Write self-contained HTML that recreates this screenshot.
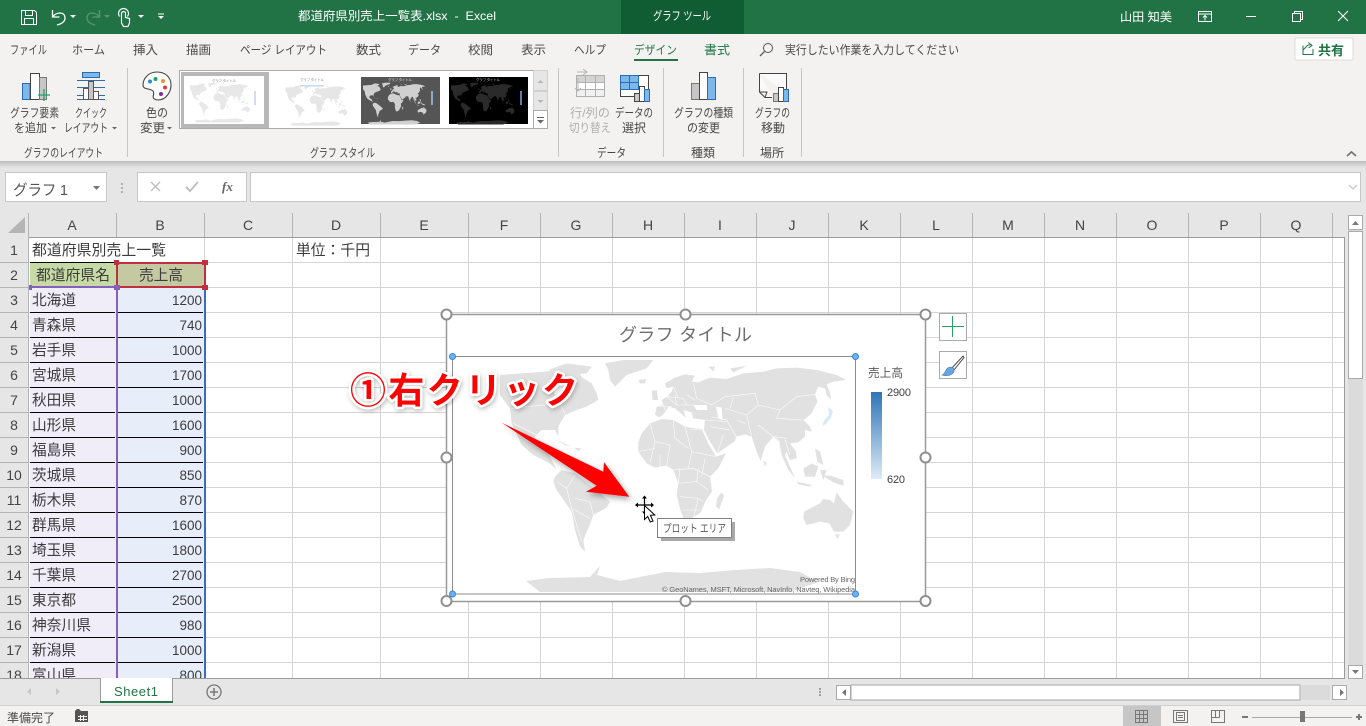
<!DOCTYPE html>
<html lang="ja"><head><meta charset="utf-8"><title>都道府県別売上一覧表.xlsx - Excel</title>
<style>
html,body{margin:0;padding:0;background:#e6e6e6;overflow:hidden;width:1366px;height:726px}
svg{display:block;position:absolute;left:0;top:0}
text{font-family:"Liberation Sans","Noto Sans CJK JP",sans-serif;white-space:pre}
.w{fill:#fff;font-size:12px}
.t{fill:#484848;font-size:12px}
.d{fill:#b0b0b0;font-size:12px}
.g{fill:#217346;font-size:12px}
.h{fill:#444;font-size:14px;text-anchor:middle}
.c{fill:#3c3c3c;font-size:14.67px}
.n{fill:#3c3c3c;font-size:13.5px;text-anchor:end}
.x{shape-rendering:crispEdges}
</style></head><body>
<svg width="1366" height="726" viewBox="0 0 1366 726" xmlns="http://www.w3.org/2000/svg">
<defs>
<linearGradient id="lg" x1="0" y1="0" x2="0" y2="1"><stop offset="0" stop-color="#2e75b6"/><stop offset="1" stop-color="#deebf7"/></linearGradient>
<linearGradient id="sh" x1="0" y1="0" x2="0" y2="1"><stop offset="0" stop-color="#bdbdbd"/><stop offset="1" stop-color="#e6e6e6"/></linearGradient>
<filter id="ds" x="-20%" y="-20%" width="150%" height="150%"><feDropShadow dx="2" dy="3" stdDeviation="3" flood-color="#000" flood-opacity=".35"/></filter>
<filter id="ts" x="-10%" y="-20%" width="120%" height="150%"><feDropShadow dx="1" dy="2" stdDeviation="2" flood-color="#000" flood-opacity=".25"/></filter>
<g id="land">
<g transform="translate(450 355) scale(.33333)">
<path d="M150 60L215 55 290 50 335 40 380 45 400 70 425 85 440 115 445 135 410 155 380 165 345 180 325 215 325 245 315 225 275 225 255 245 260 270 290 285 320 345 300 325 250 300 215 270 185 205 180 160 150 120Z"/>
<path d="M295 45L350 25 425 35 410 55 350 60Z"/>
<path d="M465 25L520 15 610 15 590 40 530 60 495 95 480 75 475 45Z"/>
<path d="M320 255L365 275 345 270Z"/><path d="M372 278L395 280 385 288Z"/>
<path d="M315 365L335 345 375 355 420 390 480 440 470 458 430 480 415 520 400 555 405 590 390 575 375 525 365 470 320 405 310 380Z"/>
</g>
<g transform="translate(630 355) scale(.33333)">
<path d="M75 178L80 155 100 150 95 135 112 125 125 110 130 95 110 100 105 85 135 68 165 58 195 62 185 80 205 82 240 68 290 72 340 55 400 50 440 40 500 38 560 45 620 60 648 75 610 80 590 88 600 112 603 135 590 120 585 100 565 95 555 118 562 140 545 175 530 188 520 195 540 215 545 230 525 225 525 245 505 262 480 265 498 290 500 310 480 315 470 290 465 300 495 370 475 345 455 300 448 262 430 245 405 275 392 318 378 285 365 245 345 238 318 245 315 258 262 295 240 260 222 225 225 195 190 190 185 172 160 165 168 188 135 160 115 155 108 170 88 188Z"/>
<path d="M25 262L35 235 60 205 95 192 130 195 165 215 195 220 215 222 235 265 258 305 288 295 265 340 240 365 246 410 228 435 212 472 185 490 160 490 150 460 140 420 145 385 130 345 110 332 75 338 50 325 25 290Z"/>
<path d="M275 412L282 422 268 462 258 455 262 428Z"/>
<path d="M522 470L570 445 580 432 600 435 612 445 620 412 640 440 670 470 660 510 640 530 612 530 598 505 570 500 530 510 520 490Z"/>
<path d="M578 362L600 362 640 375 640 392 610 382Z"/>
<path d="M520 340L545 325 565 335 555 365 525 365Z"/>
<path d="M500 380L545 390 540 395 505 388Z"/>
<path d="M570 345L590 345 580 375Z"/>
<path d="M555 280L570 290 580 330 562 320Z"/>
<path d="M400 318L410 322 405 335Z"/>
<path d="M65 108L80 105 85 135 68 135Z"/>
<path d="M25 75L48 72 45 85 30 85Z"/>
<path d="M235 35L255 35 250 50Z"/><path d="M300 40L350 33 310 52Z"/>
<path d="M615 538L630 538 622 552Z"/>
</g>
<path d="M526 581L550 578 590 577 600 566 597 575 620 581 640 577 665 572 700 573 735 570 770 568 800 572 818 582 790 592 540 592Z"/>
</g>
</defs>

<!-- title bar -->
<rect x="0" y="0" width="1366" height="34" fill="#217346"/>
<rect x="621" y="0" width="123" height="34" fill="#105c33"/>
<g fill="none" stroke="#fff" stroke-width="1">
<path d="M21.500 10.500H34.500L36.500 12.500V24.500H21.500ZM25.500 10.500V15.500H32.500V10.500M24.500 24.500V18.500H33.500V24.500"/>
<path d="M52.500 10V17H59.500M52.500 17C56 12 65 11 65 18 65 22 61 24 57 25" stroke-width="1.300"/>
<path d="M99.500 10V17H92.500M99.500 17C96 12 87 11 87 18 87 22 91 24 95 25" stroke="#5d9376" stroke-width="1.300"/>
<path d="M121.500 23V13.500A2 2 0 0 1 125.500 13.500V17.500L129.500 18.500V23L128 26.500H123.500ZM119.500 16.500A5 5 0 1 1 127.500 16.500" stroke-width="1.200"/>
<path d="M1198.500 11.500H1211.500V21.500H1198.500ZM1198.500 14H1211.500M1205 20.500V15.500M1203 17.500L1205 15.500 1207 17.500"/>
<path d="M1246 16.500H1256"/>
<path d="M1292.500 13.500H1300.500V21.500H1292.500ZM1294.500 13.500V11.500H1302.500V19.500H1300.500"/>
<path d="M1338 11L1348 21M1348 11L1338 21"/>
</g>
<g fill="#fff">
<path d="M70 15h6l-3 3z"/><path d="M104 15h6l-3 3z" fill="#5d9376"/><path d="M138 15h6l-3 3z"/>
<path d="M158 13.500h6v1h-6zM158 16h6l-3 3z"/>
</g>
<text class="w" x="298" y="20" textLength="198" lengthAdjust="spacingAndGlyphs">都道府県別売上一覧表.xlsx  -  Excel</text>
<text class="w" x="653" y="20" textLength="58" lengthAdjust="spacingAndGlyphs">グラフ ツール</text>
<text class="w" x="1120" y="21" textLength="52" lengthAdjust="spacingAndGlyphs">山田 知美</text>

<!-- ribbon -->
<rect x="0" y="34" width="1366" height="127" fill="#f3f2f1"/>
<rect x="0" y="161" width="1366" height="7" fill="url(#sh)"/>
<rect x="0" y="168" width="1366" height="46" fill="#e6e6e6"/>
<g>
<text class="t" x="10" y="54" textLength="37" lengthAdjust="spacingAndGlyphs">ファイル</text>
<text class="t" x="72" y="54" textLength="33" lengthAdjust="spacingAndGlyphs">ホーム</text>
<text class="t" x="133" y="54" textLength="25" lengthAdjust="spacingAndGlyphs">挿入</text>
<text class="t" x="186" y="54" textLength="25" lengthAdjust="spacingAndGlyphs">描画</text>
<text class="t" x="240" y="54" textLength="87" lengthAdjust="spacingAndGlyphs">ページ レイアウト</text>
<text class="t" x="356" y="54" textLength="25" lengthAdjust="spacingAndGlyphs">数式</text>
<text class="t" x="408" y="54" textLength="33" lengthAdjust="spacingAndGlyphs">データ</text>
<text class="t" x="468" y="54" textLength="25" lengthAdjust="spacingAndGlyphs">校閲</text>
<text class="t" x="521" y="54" textLength="25" lengthAdjust="spacingAndGlyphs">表示</text>
<text class="t" x="574" y="54" textLength="32" lengthAdjust="spacingAndGlyphs">ヘルプ</text>
<text class="g" x="634" y="54" textLength="43" lengthAdjust="spacingAndGlyphs">デザイン</text>
<text class="g" x="704" y="54" textLength="26" lengthAdjust="spacingAndGlyphs">書式</text>
<text class="t" x="785" y="54" textLength="174" lengthAdjust="spacingAndGlyphs">実行したい作業を入力してください</text>
</g>
<rect class="x" x="634" y="59" width="44" height="2" fill="#217346"/>
<circle cx="768" cy="48" r="4.500" fill="none" stroke="#555"/><path d="M764.500 51.500L760 56" stroke="#555" stroke-width="1.300"/>
<rect x="1295" y="38" width="58" height="22" rx="1" fill="#fff" stroke="#dedcda"/>
<path d="M1303 45.500V54.500H1313V49M1303 50L1308 45H1310.500M1308.500 42.500L1312 45.500 1308.500 48" fill="none" stroke="#217346"/>
<text x="1318" y="55" font-size="13" font-weight="700" fill="#217346" textLength="26" lengthAdjust="spacingAndGlyphs">共有</text>

<!-- ribbon separators -->
<g class="x" fill="#c6c6c6"><rect x="127" y="68" width="1" height="89"/><rect x="558" y="68" width="1" height="89"/><rect x="663" y="68" width="1" height="89"/><rect x="743" y="68" width="1" height="89"/><rect x="801" y="68" width="1" height="89"/></g>

<!-- chart elements icon -->
<g stroke="#444" stroke-width="1" class="x">
<rect x="22.500" y="83.500" width="7.500" height="16" fill="#7cb8ec" stroke="#2b6cb0"/>
<rect x="30.500" y="73.500" width="9" height="26" fill="#fff"/>
<rect x="39.500" y="77.500" width="7" height="22" fill="#c6c6c6" stroke="#777"/>
</g>
<path d="M44 89v12M38 95h12" stroke="#21a366" stroke-width="1.300"/>
<!-- quick layout icon -->
<g class="x">
<rect x="82.500" y="72.500" width="17" height="5" fill="#7cb8ec" stroke="#2b6cb0"/>
<path d="M77 80.500H105M77 87.500H105M77 95.500H105M77 99.500H105" stroke="#2b6cb0"/>
<rect x="83.500" y="88.500" width="5" height="11" fill="#fff" stroke="#555"/>
<rect x="88.500" y="81.500" width="5" height="18" fill="#c6c6c6" stroke="#555"/>
<rect x="93.500" y="91.500" width="5" height="8" fill="#fff" stroke="#555"/>
</g>
<!-- palette -->
<path d="M157 72C148 72 143 79 143 85 143 90 150 88 153 91 156 94 149 99 158 100 166 100 171 92 171 85 171 77 165 72 157 72Z" fill="#fff" stroke="#444" stroke-width="1.100"/>
<circle cx="150" cy="81.500" r="2" fill="#2b88d8"/><circle cx="155.500" cy="79" r="2" fill="#21a366"/><circle cx="163" cy="81" r="2" fill="#f0912d"/><circle cx="165" cy="87.500" r="2" fill="#e23a3a"/><circle cx="161" cy="94" r="2" fill="#7b2da0"/>

<g fill="#666"><path d="M51 127h5l-2.500 2.500z"/><path d="M112 127h5l-2.500 2.500z"/><path d="M167 127h5l-2.500 2.500z"/></g>
<text class="t" x="10" y="117" textLength="49" lengthAdjust="spacingAndGlyphs">グラフ要素</text>
<text class="t" x="14" y="132" textLength="33" lengthAdjust="spacingAndGlyphs">を追加</text>
<text class="t" x="75" y="117" textLength="32" lengthAdjust="spacingAndGlyphs">クイック</text>
<text class="t" x="64" y="132" textLength="44" lengthAdjust="spacingAndGlyphs">レイアウト</text>
<text class="t" x="24" y="157" textLength="79" lengthAdjust="spacingAndGlyphs">グラフのレイアウト</text>
<text class="t" x="146" y="117" textLength="22" lengthAdjust="spacingAndGlyphs">色の</text>
<text class="t" x="140" y="132" textLength="25" lengthAdjust="spacingAndGlyphs">変更</text>

<!-- gallery -->
<rect class="x" x="179.500" y="70.500" width="368" height="58" fill="#fff" stroke="#ababab"/>
<rect class="x" x="181" y="72" width="88" height="56" fill="#b8b8b8"/>
<rect class="x" x="184" y="76" width="80" height="48" fill="#fff"/>
<use href="#land" fill="#e8e8e8" transform="translate(105 21.800) scale(.17)"/>
<rect x="254" y="91" width="2" height="14" fill="#cfdff0"/>
<text x="212" y="82" font-size="3.500" fill="#888" textLength="24">グラフ タイトル</text>
<rect class="x" x="272" y="76" width="80" height="48" fill="#fff"/>
<use href="#land" fill="#e6e6e6" transform="translate(198 22) scale(.175)"/>
<rect x="300" y="85" width="24" height="1.500" fill="#c5d8ee"/>
<text x="300" y="81" font-size="3.500" fill="#888" textLength="24">グラフ タイトル</text>
<rect class="x" x="361" y="77" width="79" height="47" fill="#555"/>
<use href="#land" fill="#d0d0d0" transform="translate(273 18) scale(.18)"/>
<rect x="431" y="91" width="2" height="14" fill="#8da9cc"/>
<text x="388" y="81" font-size="3.500" fill="#ddd" textLength="24">グラフ タイトル</text>
<rect class="x" x="449" y="77" width="79" height="47" fill="#000"/>
<use href="#land" fill="#2a2a2a" transform="translate(361 18) scale(.18)"/>
<rect x="520" y="91" width="2" height="14" fill="#5f7da5"/>
<text x="476" y="81" font-size="3.500" fill="#bbb" textLength="24">グラフ タイトル</text>
<g class="x">
<rect x="533.500" y="70.500" width="14" height="20" fill="#e6e6e6" stroke="#d0d0d0"/>
<rect x="533.500" y="91.500" width="14" height="19" fill="#e6e6e6" stroke="#d0d0d0"/>
<rect x="533.500" y="110.500" width="14" height="18" fill="#fff" stroke="#ababab"/>
</g>
<path d="M537.500 83l3-3 3 3z" fill="#b5b5b5"/><path d="M537.500 100l3 3 3-3z" fill="#b5b5b5"/><path d="M537 117h7v1h-7zM537 120h7l-3.500 3.500z" fill="#666"/>
<text class="t" x="310" y="157" textLength="65" lengthAdjust="spacingAndGlyphs">グラフ スタイル</text>

<!-- data icons -->
<g class="x" fill="none" stroke="#b0b0b0">
<rect x="576.500" y="75.500" width="28" height="21" fill="#fff"/>
<rect x="576.500" y="75.500" width="28" height="7" fill="#d4d4d4"/>
<rect x="576.500" y="89.500" width="28" height="7" fill="#f0f0f0"/>
<path d="M585.500 75.500V96.500M595.500 75.500V96.500M576.500 82.500H604.500M576.500 89.500H604.500"/>
</g>
<path d="M577 72l10 0M583 69l4 3-4 3M575 88l3 3 3-3M578 91V78" fill="none" stroke="#b5b5b5"/>
<g class="x" stroke="#444">
<rect x="620.500" y="75.500" width="28" height="21" fill="#fff"/>
<rect x="620.500" y="75.500" width="18" height="14" fill="#7cb8ec" stroke="#2b6cb0"/>
<path d="M629.500 75.500V89.500M620.500 82.500H638.500" stroke="#2b6cb0"/>
<rect x="634.500" y="93.500" width="5" height="8" fill="#c6c6c6"/>
<rect x="639.500" y="86.500" width="5" height="15" fill="#fff"/>
<rect x="644.500" y="89.500" width="5" height="12" fill="#7cb8ec" stroke="#2b6cb0"/>
</g>
<text class="d" x="570" y="117" textLength="40" lengthAdjust="spacingAndGlyphs">行/列の</text>
<text class="d" x="569" y="132" textLength="42" lengthAdjust="spacingAndGlyphs">切り替え</text>
<text class="t" x="615" y="117" textLength="38" lengthAdjust="spacingAndGlyphs">データの</text>
<text class="t" x="622" y="132" textLength="24" lengthAdjust="spacingAndGlyphs">選択</text>
<text class="t" x="597" y="157" textLength="29" lengthAdjust="spacingAndGlyphs">データ</text>
<!-- chart type -->
<g class="x" stroke="#444">
<rect x="691.500" y="83.500" width="8" height="16" fill="#c6c6c6" stroke="#777"/>
<rect x="699.500" y="72.500" width="8" height="27" fill="#fff"/>
<rect x="707.500" y="77.500" width="8" height="22" fill="#7cb8ec" stroke="#2b6cb0"/>
</g>
<text class="t" x="674" y="117" textLength="59" lengthAdjust="spacingAndGlyphs">グラフの種類</text>
<text class="t" x="687" y="132" textLength="33" lengthAdjust="spacingAndGlyphs">の変更</text>
<text class="t" x="691" y="157" textLength="24" lengthAdjust="spacingAndGlyphs">種類</text>
<!-- move chart -->
<path d="M759.500 73.500H786.500V93M759.500 73.500V92L765 97.500H772M759.500 92H767L765 97.500" fill="#fafafa" stroke="#444"/>
<g class="x" stroke="#444">
<rect x="773.500" y="93.500" width="5" height="8" fill="#c6c6c6" stroke="#777"/>
<rect x="778.500" y="87.500" width="5" height="14" fill="#fff"/>
<rect x="783.500" y="89.500" width="5" height="12" fill="#7cb8ec" stroke="#2b6cb0"/>
</g>
<text class="t" x="755" y="117" textLength="35" lengthAdjust="spacingAndGlyphs">グラフの</text>
<text class="t" x="761" y="132" textLength="24" lengthAdjust="spacingAndGlyphs">移動</text>
<text class="t" x="760" y="157" textLength="24" lengthAdjust="spacingAndGlyphs">場所</text>
<path d="M1347 156l4.500-4 4.500 4" fill="none" stroke="#777" stroke-width="1.800"/>

<!-- formula bar -->
<g class="x" stroke="#c6c6c6" fill="#fff">
<rect x="5.500" y="172.500" width="101" height="29"/>
<rect x="137.500" y="172.500" width="109" height="29"/>
<rect x="250.500" y="172.500" width="1110" height="29"/>
</g>
<text x="13" y="195" font-size="14.670" fill="#555" textLength="55" lengthAdjust="spacing">グラフ 1</text>
<path d="M93 186h7l-3.500 4z" fill="#777"/>
<g fill="#b0b0b0" class="x"><rect x="121" y="183" width="2" height="2"/><rect x="121" y="187" width="2" height="2"/><rect x="121" y="191" width="2" height="2"/></g>
<path d="M151 182L160 191M160 182L151 191" stroke="#c0c0c0" stroke-width="1.500"/>
<path d="M186 187L190 191 198 182" fill="none" stroke="#c0c0c0" stroke-width="2"/>
<text x="222" y="191" style="font-family:'Liberation Serif',serif" font-size="13" font-style="italic" font-weight="700" fill="#666">fx</text>
<path d="M1349 185l4 4 4-4" fill="none" stroke="#ccc" stroke-width="1.500"/>

<!-- sheet -->
<rect x="29" y="238" width="1316" height="440" fill="#fff"/>
<rect x="0" y="213" width="29" height="465" fill="#e6e6e6"/>
<rect x="29" y="213" width="1316" height="24" fill="#e6e6e6"/>
<path d="M8 233H25V217Z" fill="#b5b5b5"/>
<path class="x" fill="none" stroke="#d4d4d4" d="M204.500 238V678M292.500 238V678M380.500 238V678M468.500 238V678M540.500 238V678M612.500 238V678M684.500 238V678M756.500 238V678M828.500 238V678M900.500 238V678M972.500 238V678M1044.500 238V678M1116.500 238V678M1188.500 238V678M1260.500 238V678M1332.500 238V678M29 262.500H1345M29 287.500H1345M29 312.500H1345M29 337.500H1345M29 362.500H1345M29 387.500H1345M29 412.500H1345M29 437.500H1345M29 462.500H1345M29 487.500H1345M29 512.500H1345M29 537.500H1345M29 562.500H1345M29 587.500H1345M29 612.500H1345M29 637.500H1345M29 662.500H1345"/>
<path class="x" fill="none" stroke="#b4b4b4" d="M28.500 213V678M116.500 213V237M204.500 213V237M292.500 213V237M380.500 213V237M468.500 213V237M540.500 213V237M612.500 213V237M684.500 213V237M756.500 213V237M828.500 213V237M900.500 213V237M972.500 213V237M1044.500 213V237M1116.500 213V237M1188.500 213V237M1260.500 213V237M1332.500 213V237M0 262.500H28M0 287.500H28M0 312.500H28M0 337.500H28M0 362.500H28M0 387.500H28M0 412.500H28M0 437.500H28M0 462.500H28M0 487.500H28M0 512.500H28M0 537.500H28M0 562.500H28M0 587.500H28M0 612.500H28M0 637.500H28M0 662.500H28"/>
<path class="x" fill="none" stroke="#9b9b9b" d="M29 237.500H1345M1344.500 237V678"/>
<g>
<text class="h" x="72" y="230">A</text><text class="h" x="160" y="230">B</text><text class="h" x="248" y="230">C</text><text class="h" x="336" y="230">D</text><text class="h" x="424" y="230">E</text><text class="h" x="504" y="230">F</text><text class="h" x="576" y="230">G</text><text class="h" x="648" y="230">H</text><text class="h" x="720" y="230">I</text><text class="h" x="792" y="230">J</text><text class="h" x="864" y="230">K</text><text class="h" x="936" y="230">L</text><text class="h" x="1008" y="230">M</text><text class="h" x="1080" y="230">N</text><text class="h" x="1152" y="230">O</text><text class="h" x="1224" y="230">P</text><text class="h" x="1296" y="230">Q</text>
<text class="h" x="14" y="255">1</text><text class="h" x="14" y="280">2</text><text class="h" x="14" y="305">3</text><text class="h" x="14" y="330">4</text><text class="h" x="14" y="355">5</text><text class="h" x="14" y="380">6</text><text class="h" x="14" y="405">7</text><text class="h" x="14" y="430">8</text><text class="h" x="14" y="455">9</text><text class="h" x="14" y="480">10</text><text class="h" x="14" y="505">11</text><text class="h" x="14" y="530">12</text><text class="h" x="14" y="555">13</text><text class="h" x="14" y="580">14</text><text class="h" x="14" y="605">15</text><text class="h" x="14" y="630">16</text><text class="h" x="14" y="655">17</text><text class="h" x="14" y="680">18</text>
</g>
<!-- table fills -->
<g class="x">
<rect x="30" y="263" width="86" height="24" fill="#c6daa6"/>
<rect x="118" y="263" width="86" height="24" fill="#c5c9a2"/>
<rect x="30" y="288" width="86" height="390" fill="#f0edf8"/>
<rect x="118" y="288" width="86" height="390" fill="#e7eef9"/>
<path fill="none" stroke="#000" d="M30 262.500H115M30 312.500H115M118 312.500H203M30 337.500H115M118 337.500H203M30 362.500H115M118 362.500H203M30 387.500H115M118 387.500H203M30 412.500H115M118 412.500H203M30 437.500H115M118 437.500H203M30 462.500H115M118 462.500H203M30 487.500H115M118 487.500H203M30 512.500H115M118 512.500H203M30 537.500H115M118 537.500H203M30 562.500H115M118 562.500H203M30 587.500H115M118 587.500H203M30 612.500H115M118 612.500H203M30 637.500H115M118 637.500H203M30 662.500H115M118 662.500H203"/>
<rect x="30" y="286" width="87" height="2" fill="#8560bd"/>
<rect x="116" y="288" width="2" height="390" fill="#8560bd"/>
<rect x="204" y="288" width="2" height="390" fill="#3b6cc0"/>
<path fill="none" stroke="#c0303f" stroke-width="2" d="M117 263H205V287H117Z"/>
<rect x="114" y="260" width="5" height="5" fill="#c0303f"/>
<rect x="202" y="260" width="6" height="5" fill="#c0303f"/>
<rect x="202" y="285" width="6" height="5" fill="#c0303f"/>
<rect x="114" y="285" width="6" height="5" fill="#8560bd"/>
<rect x="29" y="285" width="3" height="5" fill="#8560bd"/>
</g>
<text class="c" x="32" y="255" textLength="134" lengthAdjust="spacingAndGlyphs">都道府県別売上一覧</text>
<text class="c" x="296" y="255" textLength="74" lengthAdjust="spacingAndGlyphs">単位：千円</text>
<text class="c" x="36" y="280" textLength="74" lengthAdjust="spacingAndGlyphs">都道府県名</text>
<text class="c" x="139" y="280" textLength="44" lengthAdjust="spacingAndGlyphs">売上高</text>
<text class="c" x="32" y="305" textLength="44">北海道</text><text class="n" x="202" y="305">1200</text>
<text class="c" x="32" y="330" textLength="44">青森県</text><text class="n" x="202" y="330">740</text>
<text class="c" x="32" y="355" textLength="44">岩手県</text><text class="n" x="202" y="355">1000</text>
<text class="c" x="32" y="380" textLength="44">宮城県</text><text class="n" x="202" y="380">1700</text>
<text class="c" x="32" y="405" textLength="44">秋田県</text><text class="n" x="202" y="405">1000</text>
<text class="c" x="32" y="430" textLength="44">山形県</text><text class="n" x="202" y="430">1600</text>
<text class="c" x="32" y="455" textLength="44">福島県</text><text class="n" x="202" y="455">900</text>
<text class="c" x="32" y="480" textLength="44">茨城県</text><text class="n" x="202" y="480">850</text>
<text class="c" x="32" y="505" textLength="44">栃木県</text><text class="n" x="202" y="505">870</text>
<text class="c" x="32" y="530" textLength="44">群馬県</text><text class="n" x="202" y="530">1600</text>
<text class="c" x="32" y="555" textLength="44">埼玉県</text><text class="n" x="202" y="555">1800</text>
<text class="c" x="32" y="580" textLength="44">千葉県</text><text class="n" x="202" y="580">2700</text>
<text class="c" x="32" y="605" textLength="44">東京都</text><text class="n" x="202" y="605">2500</text>
<text class="c" x="32" y="630" textLength="59">神奈川県</text><text class="n" x="202" y="630">980</text>
<text class="c" x="32" y="655" textLength="44">新潟県</text><text class="n" x="202" y="655">1000</text>
<text class="c" x="32" y="680" textLength="44">富山県</text><text class="n" x="202" y="680">800</text>

<!-- chart -->
<rect x="446.500" y="314.500" width="479" height="287" fill="#fff" stroke="#999" stroke-width="1.500"/>
<use href="#land" fill="#e1e1e1"/>
<g transform="translate(630 355) scale(.33333)" fill="none" stroke="#fff" stroke-width="1.600">
<path d="M60 205L75 260 120 270M130 195L135 250 175 280M165 215L185 290 175 340M215 222L180 225M185 290L258 305M130 345L190 340 240 365M145 385L200 380 235 405M150 425L205 430 220 440M160 465L210 465M75 260L60 325M120 270L110 332M25 290L75 280M150 340L145 385M205 340L200 380M205 430L190 490M90 300L90 335M225 310L215 365"/>
<path d="M85 155L125 155M110 125L140 150 190 150M130 95L145 130M190 85L200 130 245 150 285 125 375 115 385 150 450 165 500 125 555 118M285 160L350 180 385 150M350 180L365 245M245 185L290 195 318 245M225 195L290 200M262 295L280 240M385 210L430 245 470 250M450 165L440 190 515 195M465 255L480 300M100 150L112 180M140 150L135 120M170 120L195 135M300 160L310 125M240 215L300 225M320 195L345 205M435 245L450 262M110 125L160 130M160 130L170 150"/>
</g>
<g fill="#fff" transform="translate(630 355) scale(.33333)">
<path d="M190 150L230 150 232 165 200 165Z"/><path d="M258 155L275 158 278 195 265 190Z"/>
</g>
<g transform="translate(450 355) scale(.33333)" fill="none" stroke="#fff" stroke-width="1.600">
<path d="M185 160L330 145 345 175M190 205L260 240M320 380L350 400 375 360M350 400L365 460 420 490M365 460L395 560M375 430L420 440 430 480"/>
<path d="M300 80L335 75 345 110 315 120Z" fill="#fff" stroke="none"/>
</g>
<path d="M828 407L833 411 831 417 826 424 822 426 824 421 829 415Z" fill="#d8e8f8"/>
<rect x="452.500" y="356.500" width="403" height="237.500" fill="none" stroke="#8c8c8c"/>
<text x="619" y="341" font-size="18" fill="#6e6e6e" textLength="133" lengthAdjust="spacing">グラフ タイトル</text>
<text x="868" y="377" font-size="12" fill="#595959" textLength="35" lengthAdjust="spacingAndGlyphs">売上高</text>
<rect x="871" y="392" width="11" height="87" fill="url(#lg)"/>
<text x="887" y="396" font-size="11" fill="#404040" textLength="24">2900</text>
<text x="887" y="483" font-size="11" fill="#404040" textLength="18">620</text>
<text x="800" y="582" font-size="7.500" fill="#666" textLength="55">Powered By Bing</text>
<text x="662" y="592" font-size="7.500" fill="#666" textLength="193">© GeoNames, MSFT, Microsoft, NavInfo, Navteq, Wikipedia</text>
<g fill="#fff" stroke="#8f8f8f" stroke-width="2">
<circle cx="446.500" cy="314.500" r="5"/><circle cx="685.500" cy="314.500" r="5"/><circle cx="925.500" cy="314.500" r="5"/>
<circle cx="446.500" cy="457.500" r="5"/><circle cx="925.500" cy="457.500" r="5"/>
<circle cx="446.500" cy="601" r="5"/><circle cx="685.500" cy="601" r="5"/><circle cx="925.500" cy="601" r="5"/>
</g>
<g fill="#6db3f2" stroke="#3585d8">
<circle cx="452.500" cy="356.500" r="3"/><circle cx="855.500" cy="356.500" r="3"/><circle cx="452.500" cy="594" r="3"/><circle cx="855.500" cy="594" r="3"/>
</g>
<!-- side buttons -->
<rect class="x" x="939.500" y="313.500" width="27" height="27" fill="#fff" stroke="#aaa"/>
<path class="x" d="M942 326.500H964M952.500 316V337" stroke="#21a366" fill="none"/>
<rect class="x" x="939.500" y="351.500" width="27" height="27" fill="#fff" stroke="#aaa"/>
<path d="M952 368L963 356 964 357.500 954 370" fill="#fff" stroke="#444"/>
<path d="M942 375C946 374 945 367 951 367 955 368 955 372 952 374 949 376 945 376 942 375Z" fill="#6aa5dd" stroke="#3b7dc0" stroke-width=".6"/>

<!-- tooltip -->
<rect class="x" x="661" y="522" width="74" height="19" fill="#a8a8a8"/>
<rect class="x" x="657.500" y="518.500" width="74" height="19" fill="#fff" stroke="#808080"/>
<text x="663" y="532" font-size="11" fill="#575757" textLength="63" lengthAdjust="spacingAndGlyphs">プロット エリア</text>

<!-- cursor -->
<path d="M644.500 497V513M636.500 505H652.500" stroke="#000" stroke-width="1.200"/>
<path d="M644.500 495.500l-2.500 3h5zM644.500 514.500l-2.500-3h5zM635 505l3-2.500v5zM654 505l-3-2.500v5z" fill="#000"/>
<path d="M644.500 505.500V519.500L647.700 516.500 650.300 522 653 521 650.400 515.300 654.800 515Z" fill="#fff" stroke="#000"/>

<!-- annotation -->
<path d="M501.700 422.700L603.300 471.700 604 462.300 629.300 496.700 586 491.700 596.700 485.700Z" fill="#f00" filter="url(#ds)"/>
<text x="350" y="403" font-size="36" font-weight="700" fill="#f00" stroke="#fff" stroke-width="5" stroke-linejoin="round" paint-order="stroke" textLength="228" lengthAdjust="spacing" filter="url(#ts)">①右クリック</text>

<!-- sheet tabs bar -->
<rect x="0" y="678" width="1345" height="28" fill="#e6e6e6"/>
<rect x="1345" y="678" width="21" height="28" fill="#e6e6e6"/>
<rect class="x" x="0" y="678" width="1345" height="1" fill="#9b9b9b"/>
<path d="M31 688v7l-4-3.500zM56 688v7l4-3.500z" fill="#c6c6c6"/>
<rect class="x" x="100" y="678" width="73" height="23" fill="#fff"/>
<path class="x" d="M100.500 678V703M172.500 678V703" stroke="#9b9b9b" fill="none"/>
<rect class="x" x="100" y="701" width="73" height="2" fill="#217346"/>
<text x="114" y="696" font-size="13" fill="#217346" textLength="44">Sheet1</text>
<circle cx="214" cy="692" r="7" fill="none" stroke="#777" stroke-width="1.300"/><path d="M210 692H218M214 688V696" stroke="#777" stroke-width="1.500"/>
<g fill="#a0a0a0" class="x"><rect x="819" y="688" width="2" height="2"/><rect x="819" y="691" width="2" height="2"/><rect x="819" y="694" width="2" height="2"/></g>
<g class="x">
<rect x="836.500" y="685.500" width="14" height="14" fill="#fff" stroke="#aaa"/>
<rect x="851" y="685" width="449" height="15" fill="#fff" stroke="#a5a5a5"/>
<rect x="1301" y="685" width="29" height="15" fill="#dbdbdb"/>
<rect x="1332.500" y="685.500" width="14" height="14" fill="#fff" stroke="#aaa"/>
</g>
<path d="M846 689v7l-4-3.500zM1340 689v7l4-3.500z" fill="#777"/>
<!-- vertical scroll -->
<rect x="1345" y="213" width="21" height="465" fill="#e6e6e6"/>
<rect class="x" x="1348" y="230" width="15" height="435" fill="#dbdbdb"/>
<rect class="x" x="1348.500" y="215.500" width="14" height="14" fill="#fff" stroke="#aaa"/>
<rect class="x" x="1348.500" y="231.500" width="14" height="147" fill="#fff" stroke="#aaa"/>
<rect class="x" x="1348.500" y="665.500" width="14" height="13" fill="#fff" stroke="#aaa"/>
<path d="M1352 225l3.500-4 3.500 4zM1352 670l3.500 4 3.500-4z" fill="#777"/>

<!-- status bar -->
<rect x="0" y="706" width="1366" height="20" fill="#f3f2f1"/>
<rect class="x" x="0" y="705" width="1366" height="1" fill="#d0d0d0"/>
<text class="t" x="7" y="722" textLength="48" lengthAdjust="spacingAndGlyphs">準備完了</text>
<g class="x" fill="#555"><rect x="75" y="711" width="13" height="11"/><circle cx="78" cy="712" r="3"/></g>
<path class="x" d="M78 716.500H87M78 719.500H87M80.500 715V721M83.500 715V721" stroke="#f3f2f1" fill="none"/>
<rect class="x" x="1123" y="706" width="38" height="20" fill="#c6c6c6"/>
<path class="x" d="M1135.500 710.500H1147.500V722.500H1135.500ZM1139.500 710.500V722.500M1143.500 710.500V722.500M1135.500 714.500H1147.500M1135.500 718.500H1147.500" fill="none" stroke="#777"/>
<path class="x" d="M1173.500 710.500H1187.500V722.500H1173.500ZM1176.500 712.500H1184.500V720.500H1176.500ZM1178 715.500H1183M1178 717.500H1183" fill="none" stroke="#777"/>
<path class="x" d="M1211.500 710.500H1224.500V722.500H1211.500ZM1211.500 717.500H1219.500M1219.500 710.500V717.500M1215.500 710.500V717.500" fill="none" stroke="#777"/>
<rect class="x" x="1242" y="716" width="6" height="2" fill="#777"/>
<rect class="x" x="1252" y="717" width="100" height="1" fill="#a8a8a8"/>
<rect class="x" x="1300" y="711" width="5" height="11" fill="#777"/>
<path class="x" d="M1356 717H1362M1359 714V720" stroke="#777" stroke-width="2" fill="none"/>
</svg>
</body></html>
